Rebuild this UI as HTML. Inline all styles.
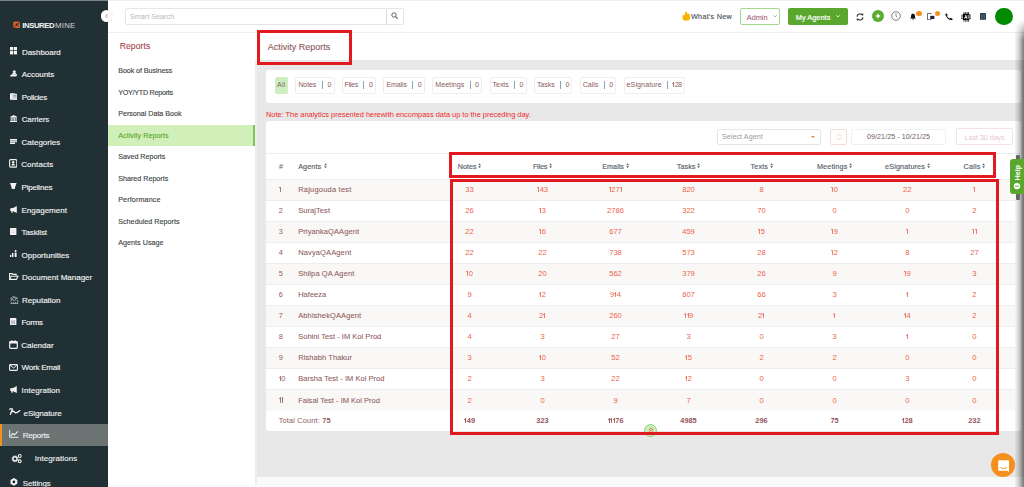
<!DOCTYPE html>
<html><head><meta charset="utf-8">
<style>
*{box-sizing:border-box;margin:0;padding:0}
html,body{width:1024px;height:487px;overflow:hidden;background:#fff;font-family:"Liberation Sans",sans-serif}
.a{position:absolute;white-space:nowrap}
.t{position:absolute;white-space:nowrap;line-height:12px;height:12px}
.row{position:absolute;left:266px;width:748.7px}
.rb{position:absolute;border:3.5px solid #e11a1f}
.n1{display:inline-block;position:relative;width:0.36em;height:0.71em}
.n1:before{content:"";position:absolute;left:0.15em;top:0;bottom:0;width:0.095em;background:currentColor;opacity:.8}
.n1:after{content:"";position:absolute;left:0.03em;top:0.1em;width:0.16em;height:0.085em;background:currentColor;transform:rotate(-38deg);opacity:.8}
.b1:before{width:0.15em;opacity:.9}.b1:after{height:0.12em;opacity:.9}
</style></head><body>
<div class="a" style="left:0;top:0;width:108px;height:487px;background:#213035"></div>
<div class="a" style="left:0;top:0;width:108px;height:1px;background:#7e8486"></div>
<div class="a" style="left:0;top:424px;width:108px;height:22px;background:#6b7373"></div>
<div class="a" style="left:0;top:424px;width:2px;height:22px;background:#f39220"></div>
<svg class="a" style="left:13px;top:21px" width="7.4" height="7.4" viewBox="0 0 7.4 7.4"><defs><linearGradient id="lg" x1="0" y1="0" x2="1" y2="1"><stop offset="0" stop-color="#d98a2a"/><stop offset=".5" stop-color="#c8452a"/><stop offset="1" stop-color="#d9962a"/></linearGradient></defs><rect x="0.2" y="0.4" width="7" height="6.8" rx="2" fill="url(#lg)"/><circle cx="3.7" cy="3.7" r="1.1" fill="#22302f"/><circle cx="5.6" cy="1.9" r="0.5" fill="#4a2a20"/><circle cx="1.9" cy="5.6" r="0.5" fill="#4a2a20"/><circle cx="5.3" cy="5.4" r="0.55" fill="#3a2a22"/></svg>
<div class="t" style="left:22.30px;top:19.60px;font-size:7.8px;color:#f4f4f4;letter-spacing:-0.467px;font-weight:700;">INSURED</div>
<div class="t" style="left:55.00px;top:19.60px;font-size:7.8px;color:#d8d8d8;letter-spacing:0.267px;">MINE</div>
<div class="t" style="left:21.90px;top:46.70px;font-size:8.0px;color:#f2f2f2;letter-spacing:-0.030px;-webkit-text-stroke:0.14px #f2f2f2;">Dashboard</div>
<div class="t" style="left:21.70px;top:69.25px;font-size:8.0px;color:#f2f2f2;letter-spacing:-0.044px;-webkit-text-stroke:0.14px #f2f2f2;">Accounts</div>
<div class="t" style="left:21.70px;top:91.80px;font-size:8.0px;color:#f2f2f2;letter-spacing:-0.281px;-webkit-text-stroke:0.14px #f2f2f2;">Policies</div>
<div class="t" style="left:21.70px;top:114.35px;font-size:8.0px;color:#f2f2f2;letter-spacing:-0.121px;-webkit-text-stroke:0.14px #f2f2f2;">Carriers</div>
<div class="t" style="left:21.50px;top:136.90px;font-size:8.0px;color:#f2f2f2;letter-spacing:0.001px;-webkit-text-stroke:0.14px #f2f2f2;">Categories</div>
<div class="t" style="left:21.20px;top:159.45px;font-size:8.0px;color:#f2f2f2;letter-spacing:0.076px;-webkit-text-stroke:0.14px #f2f2f2;">Contacts</div>
<div class="t" style="left:21.50px;top:182.00px;font-size:8.0px;color:#f2f2f2;letter-spacing:-0.196px;-webkit-text-stroke:0.14px #f2f2f2;">Pipelines</div>
<div class="t" style="left:21.50px;top:204.55px;font-size:8.0px;color:#f2f2f2;letter-spacing:0.004px;-webkit-text-stroke:0.14px #f2f2f2;">Engagement</div>
<div class="t" style="left:21.50px;top:227.10px;font-size:8.0px;color:#f2f2f2;letter-spacing:-0.090px;-webkit-text-stroke:0.14px #f2f2f2;">Tasklist</div>
<div class="t" style="left:21.50px;top:249.65px;font-size:8.0px;color:#f2f2f2;letter-spacing:0.010px;-webkit-text-stroke:0.14px #f2f2f2;">Opportunities</div>
<div class="t" style="left:22.00px;top:272.20px;font-size:8.0px;color:#f2f2f2;letter-spacing:-0.004px;-webkit-text-stroke:0.14px #f2f2f2;">Document Manager</div>
<div class="t" style="left:22.00px;top:294.75px;font-size:8.0px;color:#f2f2f2;letter-spacing:-0.033px;-webkit-text-stroke:0.14px #f2f2f2;">Reputation</div>
<div class="t" style="left:21.50px;top:317.30px;font-size:8.0px;color:#f2f2f2;letter-spacing:-0.266px;-webkit-text-stroke:0.14px #f2f2f2;">Forms</div>
<div class="t" style="left:21.20px;top:339.85px;font-size:8.0px;color:#f2f2f2;letter-spacing:-0.009px;-webkit-text-stroke:0.14px #f2f2f2;">Calendar</div>
<div class="t" style="left:21.60px;top:362.40px;font-size:8.0px;color:#f2f2f2;letter-spacing:-0.238px;-webkit-text-stroke:0.14px #f2f2f2;">Work Email</div>
<div class="t" style="left:21.60px;top:384.95px;font-size:8.0px;color:#f2f2f2;letter-spacing:0.060px;-webkit-text-stroke:0.14px #f2f2f2;">Integration</div>
<div class="t" style="left:23.50px;top:407.50px;font-size:8.0px;color:#f2f2f2;letter-spacing:-0.044px;-webkit-text-stroke:0.14px #f2f2f2;">eSignature</div>
<div class="t" style="left:22.70px;top:429.70px;font-size:8.0px;color:#f2f2f2;letter-spacing:-0.202px;-webkit-text-stroke:0.12px #f2f2f2;">Reports</div>
<div class="t" style="left:34.70px;top:452.90px;font-size:8.0px;color:#f2f2f2;letter-spacing:0.063px;-webkit-text-stroke:0.12px #f2f2f2;">Integrations</div>
<div class="t" style="left:22.70px;top:478.00px;font-size:8.0px;color:#f2f2f2;letter-spacing:-0.115px;-webkit-text-stroke:0.12px #f2f2f2;">Settings</div>
<svg class="a" style="left:9.9px;top:47.2px" width="7.4" height="7.4" viewBox="0 0 7.4 7.4"><rect x="0" y="0" width="3.3" height="3.3" fill="#f2f2f2"/><rect x="4" y="0" width="3.4" height="3.3" fill="#f2f2f2"/><rect x="0" y="4" width="3.3" height="3.4" fill="#f2f2f2"/><rect x="4" y="4" width="3.4" height="3.4" fill="#f2f2f2"/></svg>
<svg class="a" style="left:9.9px;top:70px" width="7.2" height="6.6" viewBox="0 0 7.2 6.6"><circle cx="4.3" cy="1.7" r="1.5" fill="#f2f2f2"/><path d="M1.6 4.6Q2.2 2.8 4.3 2.8Q6.4 2.8 6.9 4.6Z" fill="#f2f2f2"/><path d="M0 6.6Q0.3 4.4 2.2 4.3L7.2 4.6Q7.1 6.6 5.2 6.6Z" fill="#f2f2f2"/></svg>
<svg class="a" style="left:9.9px;top:92.7px" width="7.3" height="7.2" viewBox="0 0 7.3 7.2"><rect x="0" y="0.3" width="5" height="6.4" rx="0.6" fill="#f2f2f2"/><rect x="2.2" y="0.8" width="5" height="6.4" rx="0.6" fill="#d8dde0"/><rect x="3.2" y="2" width="3" height="0.7" fill="#8a9296"/><rect x="3.2" y="3.6" width="3" height="0.7" fill="#8a9296"/></svg>
<svg class="a" style="left:9.9px;top:115px" width="7.3" height="7" viewBox="0 0 7.3 7"><path d="M3.65 0L7.3 2H0Z" fill="#f2f2f2"/><rect x="0.3" y="2.3" width="6.7" height="0.8" fill="#f2f2f2"/><rect x="0.7" y="3.1" width="1" height="2.7" fill="#f2f2f2"/><rect x="2.4" y="3.1" width="1" height="2.7" fill="#f2f2f2"/><rect x="3.9" y="3.1" width="1" height="2.7" fill="#f2f2f2"/><rect x="5.6" y="3.1" width="1" height="2.7" fill="#f2f2f2"/><rect x="0" y="5.9" width="7.3" height="1.1" fill="#f2f2f2"/></svg>
<svg class="a" style="left:9.9px;top:138.6px" width="7.2" height="5.2" viewBox="0 0 7.2 5.2"><rect x="0" y="0" width="7.2" height="1.6" fill="#f2f2f2"/><rect x="0" y="1.8" width="7.2" height="1.5" fill="#cfd4d7"/><rect x="0" y="3.5" width="5" height="1.6" fill="#f2f2f2"/></svg>
<svg class="a" style="left:9px;top:159.3px" width="8.4" height="8.7" viewBox="0 0 8.4 8.7"><rect x="0.6" y="0.6" width="7.2" height="7.5" rx="1" fill="none" stroke="#f2f2f2" stroke-width="1.1"/><circle cx="4.2" cy="3.2" r="1.2" fill="#f2f2f2"/><path d="M2.3 6.6Q2.6 4.4 4.2 4.4Q5.8 4.4 6.1 6.6Z" fill="#f2f2f2"/></svg>
<svg class="a" style="left:10.4px;top:182.9px" width="6.6" height="6.4" viewBox="0 0 6.6 6.4"><path d="M0 0H6.6L5.4 3.3L4.6 6.4H2L1.2 3.3Z" fill="#f2f2f2"/></svg>
<svg class="a" style="left:9.9px;top:205.6px" width="7" height="7" viewBox="0 0 7 7"><path d="M0.3 2.2L2.6 2H3.2L6.8 0V7L3.2 5.2H2.6L2.9 6.8H1.6L1.2 5H0.3Z" fill="#f2f2f2"/></svg>
<svg class="a" style="left:10.4px;top:227.7px" width="6.4" height="7.3" viewBox="0 0 6.4 7.3"><rect x="0" y="0" width="6.4" height="7.3" rx="0.5" fill="#f2f2f2"/><rect x="1.2" y="2.4" width="4" height="0.5" fill="#c9ced1"/><rect x="1.2" y="4.2" width="4" height="0.5" fill="#c9ced1"/></svg>
<svg class="a" style="left:9.9px;top:250.3px" width="7.1" height="7" viewBox="0 0 7.1 7"><rect x="0" y="4.8" width="1.4" height="2.2" fill="#f2f2f2"/><rect x="2" y="3" width="1.4" height="4" fill="#f2f2f2"/><circle cx="5.6" cy="1.1" r="1" fill="#f2f2f2"/><rect x="4.6" y="2.4" width="2" height="4.6" rx="0.5" fill="#f2f2f2"/></svg>
<svg class="a" style="left:9.2px;top:272.9px" width="9.6" height="7" viewBox="0 0 9.6 7"><path d="M0.6 6.4V0.6H3.2L4 1.4H7.2V2.8" fill="none" stroke="#f2f2f2" stroke-width="1.1"/><path d="M0.6 6.4L2 3.2H9L7.4 6.4Z" fill="none" stroke="#f2f2f2" stroke-width="1.1"/></svg>
<svg class="a" style="left:10.2px;top:295.7px" width="8.6" height="8.1" viewBox="0 0 8.6 8.1"><g fill="none" stroke="#aab2b6" stroke-width="0.9"><circle cx="1.6" cy="2.6" r="0.9"/><circle cx="3.6" cy="0.9" r="0.8"/><circle cx="5.7" cy="2" r="0.8"/><path d="M0.3 5.2L2.4 3.6L4.6 4.6L8 1.6"/><path d="M0.5 7.6H8.2M1.6 6V7.6M3.6 6V7.6M5.6 6V7.6M7.6 4V7.6"/></g></svg>
<svg class="a" style="left:10.4px;top:318px" width="6.4" height="7.2" viewBox="0 0 6.4 7.2"><rect x="0" y="0" width="6.4" height="7.2" rx="0.7" fill="#f2f2f2"/><rect x="1.3" y="2.2" width="1.2" height="4" fill="#9a9aa8"/><rect x="3.6" y="2.2" width="1.2" height="4" fill="#8e98a4"/></svg>
<svg class="a" style="left:9px;top:340.2px" width="9" height="9" viewBox="0 0 9 9"><rect x="0.7" y="1.5" width="7.6" height="6.9" rx="1" fill="none" stroke="#f2f2f2" stroke-width="1.2"/><rect x="0.7" y="1.5" width="7.6" height="2" fill="#f2f2f2"/><rect x="2.3" y="0.3" width="1.2" height="1.8" fill="#f2f2f2"/><rect x="5.5" y="0.3" width="1.2" height="1.8" fill="#f2f2f2"/></svg>
<svg class="a" style="left:9px;top:363.5px" width="9" height="7" viewBox="0 0 9 7"><rect x="0.6" y="0.6" width="7.8" height="5.8" rx="0.8" fill="none" stroke="#f2f2f2" stroke-width="1.1"/><path d="M1.2 1.2L4.5 4L7.8 1.2" fill="none" stroke="#f2f2f2" stroke-width="1"/></svg>
<svg class="a" style="left:9.9px;top:385.6px" width="7" height="7" viewBox="0 0 7 7"><path d="M0.3 2.2L2.6 2H3.2L6.8 0V7L3.2 5.2H2.6L2.9 6.8H1.6L1.2 5H0.3Z" fill="#f2f2f2"/></svg>
<svg class="a" style="left:8px;top:406px" width="13" height="10" viewBox="0 0 13 10"><path d="M1.6 3.2Q3.2 2.2 4.4 3Q3.6 5.4 2.4 8.2M4.2 5.6Q5.6 4.6 6.6 6.2Q7.6 7.2 9.2 6.4Q10.6 5.6 11.8 4.6" fill="none" stroke="#f2f2f2" stroke-width="1.35" stroke-linecap="round" stroke-linejoin="round"/></svg>
<svg class="a" style="left:9.1px;top:430px" width="10" height="8" viewBox="0 0 10 8"><path d="M0.7 0V7.3H9.6" fill="none" stroke="#e6e8ea" stroke-width="1"/><path d="M1.6 6.2L3.8 3.6L5.6 4.8L8.8 1.4" fill="none" stroke="#f2f2f2" stroke-width="1.1"/></svg>
<svg class="a" style="left:10.6px;top:454.4px" width="11" height="10" viewBox="0 0 11 10"><circle cx="4" cy="4.8" r="2.9" fill="none" stroke="#f2f2f2" stroke-width="1" stroke-dasharray="1.1 0.9"/><circle cx="4" cy="4.8" r="2.1" fill="none" stroke="#f2f2f2" stroke-width="1.4"/><circle cx="8.7" cy="2" r="1.45" fill="none" stroke="#f2f2f2" stroke-width="1.1"/><circle cx="8.7" cy="7.3" r="1.45" fill="none" stroke="#f2f2f2" stroke-width="1.1"/></svg>
<svg class="a" style="left:10.3px;top:477.9px" width="7.8" height="7.8" viewBox="0 0 7.8 7.8"><path d="M3.9 0L7.3 2V5.8L3.9 7.8L0.5 5.8V2Z" fill="#f2f2f2"/><circle cx="3.9" cy="3.9" r="1.3" fill="#111a1e"/></svg>
<div class="a" style="left:108px;top:0;width:916px;height:1px;background:#eeeeee"></div>
<div class="a" style="left:108px;top:32px;width:916px;height:1px;background:#efefef"></div>
<div class="a" style="left:100.6px;top:10.4px;width:11.7px;height:11.7px;border-radius:50%;background:#fff;box-shadow:0 0 1.5px rgba(0,0,0,.2)"></div>
<div class="a" style="left:124.5px;top:8px;width:262px;height:17px;border:1px solid #e6e6e6;border-radius:2px 0 0 2px"></div>
<div class="a" style="left:386px;top:8px;width:18px;height:17px;border:1px solid #e6e6e6;border-left:1px solid #dcdcdc;border-radius:0 2px 2px 0"></div>
<div class="t" style="left:130.00px;top:11.40px;font-size:7.2px;color:#b8b8b8;letter-spacing:0.017px;">Smart Search</div>
<div class="t" style="left:691.00px;top:11.30px;font-size:7.3px;color:#474f58;letter-spacing:0.221px;-webkit-text-stroke:0.12px #474f58;">What&#x27;s New</div>
<div class="a" style="left:740.3px;top:8.3px;width:39.3px;height:16.7px;border:1px solid #a3d98a;border-radius:2px"></div>
<div class="t" style="left:746.80px;top:11.50px;font-size:7.3px;color:#9a5466;letter-spacing:0.002px;">Admin</div>
<div class="a" style="left:787.5px;top:8.3px;width:60.4px;height:16.7px;background:#5aa72d;border-radius:2px"></div>
<div class="t" style="left:795.80px;top:11.50px;font-size:7.3px;color:#ffffff;letter-spacing:0.052px;-webkit-text-stroke:0.2px #ffffff;">My Agents</div>
<div class="a" style="left:994.9px;top:7.5px;width:17.8px;height:17.8px;border-radius:50%;background:#028a02"></div>
<div class="a" style="left:871.7px;top:10.2px;width:12.1px;height:12.1px;border-radius:50%;background:#5aab2e"></div>
<div class="t" style="left:119.70px;top:40.40px;font-size:8.6px;color:#a84848;letter-spacing:0.081px;-webkit-text-stroke:0.1px #a84848;">Reports</div>
<div class="a" style="left:108px;top:125px;width:147px;height:21px;background:#d1f0b9"></div>
<div class="a" style="left:253.3px;top:125px;width:1.7px;height:21px;background:#80c256"></div>
<div class="t" style="left:118.20px;top:65.30px;font-size:7.2px;color:#3a3f44;letter-spacing:-0.089px;-webkit-text-stroke:0.12px #3a3f44;">Book of Business</div>
<div class="t" style="left:118.20px;top:86.80px;font-size:7.2px;color:#3a3f44;letter-spacing:-0.273px;-webkit-text-stroke:0.12px #3a3f44;">YOY/YTD Reports</div>
<div class="t" style="left:118.20px;top:108.30px;font-size:7.2px;color:#3a3f44;letter-spacing:-0.032px;-webkit-text-stroke:0.12px #3a3f44;">Personal Data Book</div>
<div class="t" style="left:118.20px;top:129.80px;font-size:7.2px;color:#5aa72d;letter-spacing:0.026px;-webkit-text-stroke:0.12px #5aa72d;">Activity Reports</div>
<div class="t" style="left:118.20px;top:151.30px;font-size:7.2px;color:#3a3f44;letter-spacing:-0.036px;-webkit-text-stroke:0.12px #3a3f44;">Saved Reports</div>
<div class="t" style="left:118.20px;top:172.80px;font-size:7.2px;color:#3a3f44;letter-spacing:-0.018px;-webkit-text-stroke:0.12px #3a3f44;">Shared Reports</div>
<div class="t" style="left:118.20px;top:194.30px;font-size:7.2px;color:#3a3f44;letter-spacing:0.118px;-webkit-text-stroke:0.12px #3a3f44;">Performance</div>
<div class="t" style="left:118.20px;top:215.80px;font-size:7.2px;color:#3a3f44;letter-spacing:0.016px;-webkit-text-stroke:0.12px #3a3f44;">Scheduled Reports</div>
<div class="t" style="left:118.20px;top:237.30px;font-size:7.2px;color:#3a3f44;letter-spacing:0.025px;-webkit-text-stroke:0.12px #3a3f44;">Agents Usage</div>
<div class="a" style="left:255px;top:60px;width:769px;height:417px;background:#e8e8e8"></div>
<div class="a" style="left:255px;top:477px;width:769px;height:8px;background:#f9f9f9"></div>
<div class="a" style="left:255px;top:60px;width:1.6px;height:425px;background:#eeeeee"></div>
<div class="a" style="left:108px;top:485px;width:916px;height:2px;background:#fcfcfc"></div>
<div class="t" style="left:267.70px;top:40.90px;font-size:9.0px;color:#8e5a60;letter-spacing:-0.001px;-webkit-text-stroke:0.12px #8e5a60;">Activity Reports</div>
<div class="a" style="left:266px;top:70.3px;width:754.5px;height:32.5px;background:#fff;border-radius:3px"></div>
<div class="a" style="left:274.5px;top:77.2px;width:13.5px;height:16.4px;background:#cdeec0;border-radius:2px"></div>
<div class="t" style="left:277.00px;top:79.40px;font-size:7.1px;color:#8b5b60;letter-spacing:0.255px;">All</div>
<div class="a" style="left:295.4px;top:77.2px;width:39.3px;height:16.4px;border:1px solid #eeeeee;border-radius:2px;background:#fff"></div>
<div class="t" style="left:298.40px;top:79.40px;font-size:7.1px;color:#8b5b60;letter-spacing:-0.162px;">Notes</div>
<div class="a" style="left:321.9px;top:81px;width:1px;height:8px;background:#86a4be"></div>
<div class="t" style="left:327.40px;top:79.40px;font-size:7.1px;color:#8b5b60;">0</div>
<div class="a" style="left:341.9px;top:77.2px;width:34.5px;height:16.4px;border:1px solid #eeeeee;border-radius:2px;background:#fff"></div>
<div class="t" style="left:344.60px;top:79.40px;font-size:7.1px;color:#8b5b60;letter-spacing:-0.323px;">Files</div>
<div class="a" style="left:363.4px;top:81px;width:1px;height:8px;background:#86a4be"></div>
<div class="t" style="left:368.90px;top:79.40px;font-size:7.1px;color:#8b5b60;">0</div>
<div class="a" style="left:383.3px;top:77.2px;width:41.7px;height:16.4px;border:1px solid #eeeeee;border-radius:2px;background:#fff"></div>
<div class="t" style="left:386.40px;top:79.40px;font-size:7.1px;color:#8b5b60;letter-spacing:-0.141px;">Emails</div>
<div class="a" style="left:412.2px;top:81px;width:1px;height:8px;background:#86a4be"></div>
<div class="t" style="left:417.70px;top:79.40px;font-size:7.1px;color:#8b5b60;">0</div>
<div class="a" style="left:432.1px;top:77.2px;width:50.4px;height:16.4px;border:1px solid #eeeeee;border-radius:2px;background:#fff"></div>
<div class="t" style="left:435.20px;top:79.40px;font-size:7.1px;color:#8b5b60;letter-spacing:0.042px;">Meetings</div>
<div class="a" style="left:469.5px;top:81px;width:1px;height:8px;background:#86a4be"></div>
<div class="t" style="left:475.00px;top:79.40px;font-size:7.1px;color:#8b5b60;">0</div>
<div class="a" style="left:489.7px;top:77.2px;width:37.1px;height:16.4px;border:1px solid #eeeeee;border-radius:2px;background:#fff"></div>
<div class="t" style="left:492.60px;top:79.40px;font-size:7.1px;color:#8b5b60;letter-spacing:-0.093px;">Texts</div>
<div class="a" style="left:513.9px;top:81px;width:1px;height:8px;background:#86a4be"></div>
<div class="t" style="left:519.40px;top:79.40px;font-size:7.1px;color:#8b5b60;">0</div>
<div class="a" style="left:534.2px;top:77.2px;width:37.9px;height:16.4px;border:1px solid #eeeeee;border-radius:2px;background:#fff"></div>
<div class="t" style="left:536.90px;top:79.40px;font-size:7.1px;color:#8b5b60;letter-spacing:-0.062px;">Tasks</div>
<div class="a" style="left:560.0px;top:81px;width:1px;height:8px;background:#86a4be"></div>
<div class="t" style="left:565.50px;top:79.40px;font-size:7.1px;color:#8b5b60;">0</div>
<div class="a" style="left:580.0px;top:77.2px;width:36.0px;height:16.4px;border:1px solid #eeeeee;border-radius:2px;background:#fff"></div>
<div class="t" style="left:582.70px;top:79.40px;font-size:7.1px;color:#8b5b60;letter-spacing:-0.020px;">Calls</div>
<div class="a" style="left:603.8px;top:81px;width:1px;height:8px;background:#86a4be"></div>
<div class="t" style="left:609.30px;top:79.40px;font-size:7.1px;color:#8b5b60;">0</div>
<div class="a" style="left:623.6px;top:77.2px;width:61.5px;height:16.4px;border:1px solid #eeeeee;border-radius:2px;background:#fff"></div>
<div class="t" style="left:626.50px;top:79.40px;font-size:7.1px;color:#8b5b60;letter-spacing:0.106px;">eSignature</div>
<div class="a" style="left:666.7px;top:81px;width:1px;height:8px;background:#86a4be"></div>
<div class="t" style="left:672.20px;top:79.40px;font-size:7.1px;color:#8b5b60;letter-spacing:-0.773px;"><span class="n1"></span>28</div>
<div class="t" style="left:266.00px;top:109.00px;font-size:7.39px;color:#ee2a2a;letter-spacing:0.002px;">Note: The analytics presented herewith encompass data up to the preceding day.</div>
<div class="a" style="left:266px;top:121px;width:754.5px;height:310px;background:#fff;border-radius:3px"></div>
<div class="a" style="left:266px;top:178.8px;width:748.7px;height:1px;background:#ededed"></div>
<div class="a" style="left:266px;top:153px;width:754.5px;height:1px;background:#eeeeee"></div>
<div class="a" style="left:716.6px;top:128.5px;width:104.4px;height:16.7px;border:1px solid #e6e6e6;border-radius:2px;box-shadow:0 0 1px rgba(0,0,0,.06)"></div>
<div class="t" style="left:722.00px;top:131.00px;font-size:7.1px;color:#9a9a9a;letter-spacing:0.076px;">Select Agent</div>
<svg class="a" style="left:811.2px;top:135.8px" width="3.8" height="2.2" viewBox="0 0 3.8 2.2"><path d="M0 0H3.8L1.9 2.2Z" fill="#f0892a"/></svg>
<div class="a" style="left:830.3px;top:128.5px;width:16.9px;height:16.7px;border:1px solid #f2dcd6;border-radius:2px"></div>
<div class="a" style="left:851.3px;top:128.5px;width:94.6px;height:16.7px;border:1px solid #edf0f4;border-radius:2px"></div>
<div class="t" style="left:867.00px;top:131.20px;font-size:7.1px;color:#6a5a5e;letter-spacing:0.079px;">09/21/25 - 10/21/25</div>
<div class="a" style="left:955.7px;top:128.3px;width:57.8px;height:16.7px;border:1px solid #f3e3e3;border-radius:2px"></div>
<div class="t" style="left:964.60px;top:131.60px;font-size:7.1px;color:#e6c9c9;letter-spacing:-0.015px;">Last 30 days</div>
<div class="t" style="left:279.00px;top:160.70px;font-size:7.2px;color:#566068;">#</div>
<div class="t" style="left:298.20px;top:160.70px;font-size:7.2px;color:#566068;letter-spacing:0.117px;-webkit-text-stroke:0.15px #566068;">Agents</div>
<svg class="a" style="left:323.8px;top:162.6px" width="3.2" height="5.4" viewBox="0 0 3.2 5.4"><path d="M1.6 0.2L3 2.2H0.2Z M1.6 5.2L3 3.2H0.2Z" fill="#5a646c"/></svg>
<div class="t" style="left:457.80px;top:160.70px;font-size:7.2px;color:#566068;letter-spacing:-0.002px;-webkit-text-stroke:0.15px #566068;">Notes</div>
<svg class="a" style="left:478.20000000000005px;top:163.0px" width="3.2" height="5.4" viewBox="0 0 3.2 5.4"><path d="M1.6 0.2L3 2.2H0.2Z M1.6 5.2L3 3.2H0.2Z" fill="#5a646c"/></svg>
<div class="t" style="left:532.90px;top:160.70px;font-size:7.2px;color:#566068;letter-spacing:-0.175px;-webkit-text-stroke:0.15px #566068;">Files</div>
<svg class="a" style="left:549.0px;top:163.0px" width="3.2" height="5.4" viewBox="0 0 3.2 5.4"><path d="M1.6 0.2L3 2.2H0.2Z M1.6 5.2L3 3.2H0.2Z" fill="#5a646c"/></svg>
<div class="t" style="left:602.30px;top:160.70px;font-size:7.2px;color:#566068;letter-spacing:0.019px;-webkit-text-stroke:0.15px #566068;">Emails</div>
<svg class="a" style="left:625.6px;top:163.0px" width="3.2" height="5.4" viewBox="0 0 3.2 5.4"><path d="M1.6 0.2L3 2.2H0.2Z M1.6 5.2L3 3.2H0.2Z" fill="#5a646c"/></svg>
<div class="t" style="left:676.80px;top:160.70px;font-size:7.2px;color:#566068;letter-spacing:0.074px;-webkit-text-stroke:0.15px #566068;">Tasks</div>
<svg class="a" style="left:697.1px;top:163.0px" width="3.2" height="5.4" viewBox="0 0 3.2 5.4"><path d="M1.6 0.2L3 2.2H0.2Z M1.6 5.2L3 3.2H0.2Z" fill="#5a646c"/></svg>
<div class="t" style="left:750.60px;top:160.70px;font-size:7.2px;color:#566068;letter-spacing:0.149px;-webkit-text-stroke:0.15px #566068;">Texts</div>
<svg class="a" style="left:769.6px;top:163.0px" width="3.2" height="5.4" viewBox="0 0 3.2 5.4"><path d="M1.6 0.2L3 2.2H0.2Z M1.6 5.2L3 3.2H0.2Z" fill="#5a646c"/></svg>
<div class="t" style="left:816.90px;top:160.70px;font-size:7.2px;color:#566068;letter-spacing:0.169px;-webkit-text-stroke:0.15px #566068;">Meetings</div>
<svg class="a" style="left:848.9px;top:163.0px" width="3.2" height="5.4" viewBox="0 0 3.2 5.4"><path d="M1.6 0.2L3 2.2H0.2Z M1.6 5.2L3 3.2H0.2Z" fill="#5a646c"/></svg>
<div class="t" style="left:885.10px;top:160.70px;font-size:7.2px;color:#566068;letter-spacing:0.137px;-webkit-text-stroke:0.15px #566068;">eSignatures</div>
<svg class="a" style="left:926.5px;top:163.0px" width="3.2" height="5.4" viewBox="0 0 3.2 5.4"><path d="M1.6 0.2L3 2.2H0.2Z M1.6 5.2L3 3.2H0.2Z" fill="#5a646c"/></svg>
<div class="t" style="left:963.60px;top:160.70px;font-size:7.2px;color:#566068;letter-spacing:0.199px;-webkit-text-stroke:0.15px #566068;">Calls</div>
<svg class="a" style="left:982.0px;top:163.0px" width="3.2" height="5.4" viewBox="0 0 3.2 5.4"><path d="M1.6 0.2L3 2.2H0.2Z M1.6 5.2L3 3.2H0.2Z" fill="#5a646c"/></svg>
<div class="row" style="top:179.60px;height:21.06px;background:#faf8f6;border-bottom:1px solid #ededed;"></div>
<div class="t" style="left:278.70px;top:183.90px;font-size:7.4px;color:#8f5c60;"><span class="n1"></span></div>
<div class="t" style="left:298.20px;top:183.90px;font-size:7.5px;color:#8f5c60;letter-spacing:0.204px;-webkit-text-stroke:0.08px #8f5c60;">Rajugouda test</div>
<div class="t" style="left:409.60px;width:120px;text-align:center;top:183.90px;font-size:7.6px;color:#ec5f4a;">33</div>
<div class="t" style="left:482.50px;width:120px;text-align:center;top:183.90px;font-size:7.6px;color:#ec5f4a;"><span class="n1"></span>43</div>
<div class="t" style="left:555.50px;width:120px;text-align:center;top:183.90px;font-size:7.6px;color:#ec5f4a;"><span class="n1"></span>27<span class="n1"></span></div>
<div class="t" style="left:628.50px;width:120px;text-align:center;top:183.90px;font-size:7.6px;color:#ec5f4a;">820</div>
<div class="t" style="left:701.50px;width:120px;text-align:center;top:183.90px;font-size:7.6px;color:#ec5f4a;">8</div>
<div class="t" style="left:774.50px;width:120px;text-align:center;top:183.90px;font-size:7.6px;color:#ec5f4a;"><span class="n1"></span>0</div>
<div class="t" style="left:847.30px;width:120px;text-align:center;top:183.90px;font-size:7.6px;color:#ec5f4a;">22</div>
<div class="t" style="left:914.40px;width:120px;text-align:center;top:183.90px;font-size:7.6px;color:#ec5f4a;"><span class="n1"></span></div>
<div class="row" style="top:200.66px;height:21.06px;border-bottom:1px solid #ededed;"></div>
<div class="t" style="left:278.70px;top:204.96px;font-size:7.4px;color:#8f5c60;">2</div>
<div class="t" style="left:298.20px;top:204.96px;font-size:7.5px;color:#8f5c60;letter-spacing:0.067px;-webkit-text-stroke:0.08px #8f5c60;">SurajTest</div>
<div class="t" style="left:409.60px;width:120px;text-align:center;top:204.96px;font-size:7.6px;color:#ec5f4a;">26</div>
<div class="t" style="left:482.50px;width:120px;text-align:center;top:204.96px;font-size:7.6px;color:#ec5f4a;"><span class="n1"></span>3</div>
<div class="t" style="left:555.50px;width:120px;text-align:center;top:204.96px;font-size:7.6px;color:#ec5f4a;">2786</div>
<div class="t" style="left:628.50px;width:120px;text-align:center;top:204.96px;font-size:7.6px;color:#ec5f4a;">322</div>
<div class="t" style="left:701.50px;width:120px;text-align:center;top:204.96px;font-size:7.6px;color:#ec5f4a;">70</div>
<div class="t" style="left:774.50px;width:120px;text-align:center;top:204.96px;font-size:7.6px;color:#ec5f4a;">0</div>
<div class="t" style="left:847.30px;width:120px;text-align:center;top:204.96px;font-size:7.6px;color:#ec5f4a;">0</div>
<div class="t" style="left:914.40px;width:120px;text-align:center;top:204.96px;font-size:7.6px;color:#ec5f4a;">2</div>
<div class="row" style="top:221.72px;height:21.06px;background:#faf8f6;border-bottom:1px solid #ededed;"></div>
<div class="t" style="left:278.70px;top:226.02px;font-size:7.4px;color:#8f5c60;">3</div>
<div class="t" style="left:298.20px;top:226.02px;font-size:7.5px;color:#8f5c60;letter-spacing:0.092px;-webkit-text-stroke:0.08px #8f5c60;">PriyankaQAAgent</div>
<div class="t" style="left:409.60px;width:120px;text-align:center;top:226.02px;font-size:7.6px;color:#ec5f4a;">22</div>
<div class="t" style="left:482.50px;width:120px;text-align:center;top:226.02px;font-size:7.6px;color:#ec5f4a;"><span class="n1"></span>6</div>
<div class="t" style="left:555.50px;width:120px;text-align:center;top:226.02px;font-size:7.6px;color:#ec5f4a;">677</div>
<div class="t" style="left:628.50px;width:120px;text-align:center;top:226.02px;font-size:7.6px;color:#ec5f4a;">459</div>
<div class="t" style="left:701.50px;width:120px;text-align:center;top:226.02px;font-size:7.6px;color:#ec5f4a;"><span class="n1"></span>5</div>
<div class="t" style="left:774.50px;width:120px;text-align:center;top:226.02px;font-size:7.6px;color:#ec5f4a;"><span class="n1"></span>9</div>
<div class="t" style="left:847.30px;width:120px;text-align:center;top:226.02px;font-size:7.6px;color:#ec5f4a;"><span class="n1"></span></div>
<div class="t" style="left:914.40px;width:120px;text-align:center;top:226.02px;font-size:7.6px;color:#ec5f4a;"><span class="n1"></span><span class="n1"></span></div>
<div class="row" style="top:242.78px;height:21.06px;border-bottom:1px solid #ededed;"></div>
<div class="t" style="left:278.70px;top:247.08px;font-size:7.4px;color:#8f5c60;">4</div>
<div class="t" style="left:298.20px;top:247.08px;font-size:7.5px;color:#8f5c60;letter-spacing:0.128px;-webkit-text-stroke:0.08px #8f5c60;">NavyaQAAgent</div>
<div class="t" style="left:409.60px;width:120px;text-align:center;top:247.08px;font-size:7.6px;color:#ec5f4a;">22</div>
<div class="t" style="left:482.50px;width:120px;text-align:center;top:247.08px;font-size:7.6px;color:#ec5f4a;">22</div>
<div class="t" style="left:555.50px;width:120px;text-align:center;top:247.08px;font-size:7.6px;color:#ec5f4a;">738</div>
<div class="t" style="left:628.50px;width:120px;text-align:center;top:247.08px;font-size:7.6px;color:#ec5f4a;">573</div>
<div class="t" style="left:701.50px;width:120px;text-align:center;top:247.08px;font-size:7.6px;color:#ec5f4a;">28</div>
<div class="t" style="left:774.50px;width:120px;text-align:center;top:247.08px;font-size:7.6px;color:#ec5f4a;"><span class="n1"></span>2</div>
<div class="t" style="left:847.30px;width:120px;text-align:center;top:247.08px;font-size:7.6px;color:#ec5f4a;">8</div>
<div class="t" style="left:914.40px;width:120px;text-align:center;top:247.08px;font-size:7.6px;color:#ec5f4a;">27</div>
<div class="row" style="top:263.84px;height:21.06px;background:#faf8f6;border-bottom:1px solid #ededed;"></div>
<div class="t" style="left:278.70px;top:268.14px;font-size:7.4px;color:#8f5c60;">5</div>
<div class="t" style="left:298.20px;top:268.14px;font-size:7.5px;color:#8f5c60;letter-spacing:0.105px;-webkit-text-stroke:0.08px #8f5c60;">Shilpa QA Agent</div>
<div class="t" style="left:409.60px;width:120px;text-align:center;top:268.14px;font-size:7.6px;color:#ec5f4a;"><span class="n1"></span>0</div>
<div class="t" style="left:482.50px;width:120px;text-align:center;top:268.14px;font-size:7.6px;color:#ec5f4a;">20</div>
<div class="t" style="left:555.50px;width:120px;text-align:center;top:268.14px;font-size:7.6px;color:#ec5f4a;">562</div>
<div class="t" style="left:628.50px;width:120px;text-align:center;top:268.14px;font-size:7.6px;color:#ec5f4a;">379</div>
<div class="t" style="left:701.50px;width:120px;text-align:center;top:268.14px;font-size:7.6px;color:#ec5f4a;">26</div>
<div class="t" style="left:774.50px;width:120px;text-align:center;top:268.14px;font-size:7.6px;color:#ec5f4a;">9</div>
<div class="t" style="left:847.30px;width:120px;text-align:center;top:268.14px;font-size:7.6px;color:#ec5f4a;"><span class="n1"></span>9</div>
<div class="t" style="left:914.40px;width:120px;text-align:center;top:268.14px;font-size:7.6px;color:#ec5f4a;">3</div>
<div class="row" style="top:284.90px;height:21.06px;border-bottom:1px solid #ededed;"></div>
<div class="t" style="left:278.70px;top:289.20px;font-size:7.4px;color:#8f5c60;">6</div>
<div class="t" style="left:298.20px;top:289.20px;font-size:7.5px;color:#8f5c60;letter-spacing:0.011px;-webkit-text-stroke:0.08px #8f5c60;">Hafeeza</div>
<div class="t" style="left:409.60px;width:120px;text-align:center;top:289.20px;font-size:7.6px;color:#ec5f4a;">9</div>
<div class="t" style="left:482.50px;width:120px;text-align:center;top:289.20px;font-size:7.6px;color:#ec5f4a;"><span class="n1"></span>2</div>
<div class="t" style="left:555.50px;width:120px;text-align:center;top:289.20px;font-size:7.6px;color:#ec5f4a;">9<span class="n1"></span>4</div>
<div class="t" style="left:628.50px;width:120px;text-align:center;top:289.20px;font-size:7.6px;color:#ec5f4a;">607</div>
<div class="t" style="left:701.50px;width:120px;text-align:center;top:289.20px;font-size:7.6px;color:#ec5f4a;">66</div>
<div class="t" style="left:774.50px;width:120px;text-align:center;top:289.20px;font-size:7.6px;color:#ec5f4a;">3</div>
<div class="t" style="left:847.30px;width:120px;text-align:center;top:289.20px;font-size:7.6px;color:#ec5f4a;"><span class="n1"></span></div>
<div class="t" style="left:914.40px;width:120px;text-align:center;top:289.20px;font-size:7.6px;color:#ec5f4a;">2</div>
<div class="row" style="top:305.96px;height:21.06px;background:#faf8f6;border-bottom:1px solid #ededed;"></div>
<div class="t" style="left:278.70px;top:310.26px;font-size:7.4px;color:#8f5c60;">7</div>
<div class="t" style="left:298.20px;top:310.26px;font-size:7.5px;color:#8f5c60;letter-spacing:0.122px;-webkit-text-stroke:0.08px #8f5c60;">AbhishekQAAgent</div>
<div class="t" style="left:409.60px;width:120px;text-align:center;top:310.26px;font-size:7.6px;color:#ec5f4a;">4</div>
<div class="t" style="left:482.50px;width:120px;text-align:center;top:310.26px;font-size:7.6px;color:#ec5f4a;">2<span class="n1"></span></div>
<div class="t" style="left:555.50px;width:120px;text-align:center;top:310.26px;font-size:7.6px;color:#ec5f4a;">260</div>
<div class="t" style="left:628.50px;width:120px;text-align:center;top:310.26px;font-size:7.6px;color:#ec5f4a;"><span class="n1"></span><span class="n1"></span>9</div>
<div class="t" style="left:701.50px;width:120px;text-align:center;top:310.26px;font-size:7.6px;color:#ec5f4a;">2<span class="n1"></span></div>
<div class="t" style="left:774.50px;width:120px;text-align:center;top:310.26px;font-size:7.6px;color:#ec5f4a;"><span class="n1"></span></div>
<div class="t" style="left:847.30px;width:120px;text-align:center;top:310.26px;font-size:7.6px;color:#ec5f4a;"><span class="n1"></span>4</div>
<div class="t" style="left:914.40px;width:120px;text-align:center;top:310.26px;font-size:7.6px;color:#ec5f4a;">2</div>
<div class="row" style="top:327.02px;height:21.06px;border-bottom:1px solid #ededed;"></div>
<div class="t" style="left:278.70px;top:331.32px;font-size:7.4px;color:#8f5c60;">8</div>
<div class="t" style="left:298.20px;top:331.32px;font-size:7.5px;color:#8f5c60;letter-spacing:0.029px;-webkit-text-stroke:0.08px #8f5c60;">Sohini Test - IM Kol Prod</div>
<div class="t" style="left:409.60px;width:120px;text-align:center;top:331.32px;font-size:7.6px;color:#ec5f4a;">4</div>
<div class="t" style="left:482.50px;width:120px;text-align:center;top:331.32px;font-size:7.6px;color:#ec5f4a;">3</div>
<div class="t" style="left:555.50px;width:120px;text-align:center;top:331.32px;font-size:7.6px;color:#ec5f4a;">27</div>
<div class="t" style="left:628.50px;width:120px;text-align:center;top:331.32px;font-size:7.6px;color:#ec5f4a;">3</div>
<div class="t" style="left:701.50px;width:120px;text-align:center;top:331.32px;font-size:7.6px;color:#ec5f4a;">0</div>
<div class="t" style="left:774.50px;width:120px;text-align:center;top:331.32px;font-size:7.6px;color:#ec5f4a;">3</div>
<div class="t" style="left:847.30px;width:120px;text-align:center;top:331.32px;font-size:7.6px;color:#ec5f4a;"><span class="n1"></span></div>
<div class="t" style="left:914.40px;width:120px;text-align:center;top:331.32px;font-size:7.6px;color:#ec5f4a;">0</div>
<div class="row" style="top:348.08px;height:21.06px;background:#faf8f6;border-bottom:1px solid #ededed;"></div>
<div class="t" style="left:278.70px;top:352.38px;font-size:7.4px;color:#8f5c60;">9</div>
<div class="t" style="left:298.20px;top:352.38px;font-size:7.5px;color:#8f5c60;letter-spacing:0.076px;-webkit-text-stroke:0.08px #8f5c60;">Rishabh Thakur</div>
<div class="t" style="left:409.60px;width:120px;text-align:center;top:352.38px;font-size:7.6px;color:#ec5f4a;">3</div>
<div class="t" style="left:482.50px;width:120px;text-align:center;top:352.38px;font-size:7.6px;color:#ec5f4a;"><span class="n1"></span>0</div>
<div class="t" style="left:555.50px;width:120px;text-align:center;top:352.38px;font-size:7.6px;color:#ec5f4a;">52</div>
<div class="t" style="left:628.50px;width:120px;text-align:center;top:352.38px;font-size:7.6px;color:#ec5f4a;"><span class="n1"></span>5</div>
<div class="t" style="left:701.50px;width:120px;text-align:center;top:352.38px;font-size:7.6px;color:#ec5f4a;">2</div>
<div class="t" style="left:774.50px;width:120px;text-align:center;top:352.38px;font-size:7.6px;color:#ec5f4a;">2</div>
<div class="t" style="left:847.30px;width:120px;text-align:center;top:352.38px;font-size:7.6px;color:#ec5f4a;">0</div>
<div class="t" style="left:914.40px;width:120px;text-align:center;top:352.38px;font-size:7.6px;color:#ec5f4a;">0</div>
<div class="row" style="top:369.14px;height:21.06px;border-bottom:1px solid #ededed;"></div>
<div class="t" style="left:278.70px;top:373.44px;font-size:7.4px;color:#8f5c60;"><span class="n1"></span>0</div>
<div class="t" style="left:298.20px;top:373.44px;font-size:7.5px;color:#8f5c60;letter-spacing:0.041px;-webkit-text-stroke:0.08px #8f5c60;">Barsha Test - IM Kol Prod</div>
<div class="t" style="left:409.60px;width:120px;text-align:center;top:373.44px;font-size:7.6px;color:#ec5f4a;">2</div>
<div class="t" style="left:482.50px;width:120px;text-align:center;top:373.44px;font-size:7.6px;color:#ec5f4a;">3</div>
<div class="t" style="left:555.50px;width:120px;text-align:center;top:373.44px;font-size:7.6px;color:#ec5f4a;">22</div>
<div class="t" style="left:628.50px;width:120px;text-align:center;top:373.44px;font-size:7.6px;color:#ec5f4a;"><span class="n1"></span>2</div>
<div class="t" style="left:701.50px;width:120px;text-align:center;top:373.44px;font-size:7.6px;color:#ec5f4a;">0</div>
<div class="t" style="left:774.50px;width:120px;text-align:center;top:373.44px;font-size:7.6px;color:#ec5f4a;">0</div>
<div class="t" style="left:847.30px;width:120px;text-align:center;top:373.44px;font-size:7.6px;color:#ec5f4a;">3</div>
<div class="t" style="left:914.40px;width:120px;text-align:center;top:373.44px;font-size:7.6px;color:#ec5f4a;">0</div>
<div class="row" style="top:390.20px;height:21.06px;background:#faf8f6;"></div>
<div class="t" style="left:278.70px;top:394.50px;font-size:7.4px;color:#8f5c60;"><span class="n1"></span><span class="n1"></span></div>
<div class="t" style="left:298.20px;top:394.50px;font-size:7.5px;color:#8f5c60;letter-spacing:0.006px;-webkit-text-stroke:0.08px #8f5c60;">Faisal Test - IM Kol Prod</div>
<div class="t" style="left:409.60px;width:120px;text-align:center;top:394.50px;font-size:7.6px;color:#ec5f4a;">2</div>
<div class="t" style="left:482.50px;width:120px;text-align:center;top:394.50px;font-size:7.6px;color:#ec5f4a;">0</div>
<div class="t" style="left:555.50px;width:120px;text-align:center;top:394.50px;font-size:7.6px;color:#ec5f4a;">9</div>
<div class="t" style="left:628.50px;width:120px;text-align:center;top:394.50px;font-size:7.6px;color:#ec5f4a;">7</div>
<div class="t" style="left:701.50px;width:120px;text-align:center;top:394.50px;font-size:7.6px;color:#ec5f4a;">0</div>
<div class="t" style="left:774.50px;width:120px;text-align:center;top:394.50px;font-size:7.6px;color:#ec5f4a;">0</div>
<div class="t" style="left:847.30px;width:120px;text-align:center;top:394.50px;font-size:7.6px;color:#ec5f4a;">0</div>
<div class="t" style="left:914.40px;width:120px;text-align:center;top:394.50px;font-size:7.6px;color:#ec5f4a;">0</div>
<div class="t" style="left:278.70px;top:415.40px;font-size:7.4px;color:#8f5c60;letter-spacing:0.152px;">Total Count: <b>75</b></div>
<div class="t" style="left:409.60px;width:120px;text-align:center;top:415.40px;font-size:7.4px;color:#93555b;font-weight:700;"><span class="n1 b1"></span>49</div>
<div class="t" style="left:482.50px;width:120px;text-align:center;top:415.40px;font-size:7.4px;color:#93555b;font-weight:700;">323</div>
<div class="t" style="left:555.50px;width:120px;text-align:center;top:415.40px;font-size:7.4px;color:#93555b;font-weight:700;"><span class="n1 b1"></span><span class="n1 b1"></span><span class="n1 b1"></span>76</div>
<div class="t" style="left:628.50px;width:120px;text-align:center;top:415.40px;font-size:7.4px;color:#93555b;font-weight:700;">4985</div>
<div class="t" style="left:701.50px;width:120px;text-align:center;top:415.40px;font-size:7.4px;color:#93555b;font-weight:700;">296</div>
<div class="t" style="left:774.50px;width:120px;text-align:center;top:415.40px;font-size:7.4px;color:#93555b;font-weight:700;">75</div>
<div class="t" style="left:847.30px;width:120px;text-align:center;top:415.40px;font-size:7.4px;color:#93555b;font-weight:700;"><span class="n1 b1"></span>28</div>
<div class="t" style="left:914.40px;width:120px;text-align:center;top:415.40px;font-size:7.4px;color:#93555b;font-weight:700;">232</div>
<div class="a" style="left:643.8px;top:424.1px;width:13px;height:13px;border-radius:50%;background:#c9ecb9;border:1px solid #8fd47a"></div>
<div class="rb" style="left:256.9px;top:30.2px;width:95.2px;height:34.6px"></div>
<div class="rb" style="left:449.3px;top:151.9px;width:546.9px;height:25.9px"></div>
<div class="rb" style="left:450.2px;top:179.1px;width:548.7px;height:256px"></div>
<div class="a" style="left:1014.7px;top:20px;width:9.3px;height:467px;background:linear-gradient(to right,rgba(0,0,0,.03) 0%,rgba(0,0,0,.18) 44%,rgba(0,0,0,.34) 70%,rgba(0,0,0,.53) 100%);-webkit-mask-image:linear-gradient(to bottom,transparent 0,#000 20px)"></div>
<div class="a" style="left:1016px;top:154.8px;width:3.6px;height:45px;background:#666;border-radius:1px"></div>
<div class="a" style="left:1010.3px;top:159px;width:14px;height:35px;background:#5aa72d;border-radius:3px 0 0 3px"></div>
<div class="a" style="left:991px;top:453.2px;width:24px;height:24px;border-radius:50%;background:#f5901f"></div>
<svg class="a" style="left:855.5px;top:13.3px" width="8" height="8" viewBox="0 0 8 8"><g fill="none" stroke="#1f2d3d" stroke-width="1.1"><path d="M1 3.6A3 3 0 0 1 6.4 2.2"/><path d="M7 4.4A3 3 0 0 1 1.6 5.8"/></g><path d="M5.2 0.6L7.4 0.8L7 3Z" fill="#1f2d3d"/><path d="M2.8 7.4L0.6 7.2L1 5Z" fill="#1f2d3d"/></svg>
<svg class="a" style="left:873.8px;top:12.4px" width="8" height="8" viewBox="0 0 8 8"><path d="M4 1.8V6.2M1.8 4H6.2" stroke="#fff" stroke-width="1.3"/></svg>
<svg class="a" style="left:891.3px;top:11.4px" width="10" height="10" viewBox="0 0 10 10"><circle cx="5" cy="5" r="4.3" fill="none" stroke="#6d6d6d" stroke-width="0.9"/><path d="M5 2.4V5.2L6.4 6.4" fill="none" stroke="#6d6d6d" stroke-width="0.8"/></svg>
<svg class="a" style="left:909.6px;top:13.2px" width="6" height="6.6" viewBox="0 0 6 6.6"><path d="M3 0.4Q5 0.6 5 3V4.6L6 5.6H0L1 4.6V3Q1 0.6 3 0.4Z" fill="#111"/><circle cx="3" cy="6" r="0.7" fill="#111"/></svg>
<div class="a" style="left:916.4px;top:10.6px;width:5.2px;height:5.2px;border-radius:50%;background:#f5901f"></div>
<svg class="a" style="left:927px;top:13.0px" width="7.5" height="7.2" viewBox="0 0 7.5 7.2"><path d="M4.6 0.5H0.5V6.8H4.6" fill="none" stroke="#556" stroke-width="0.9"/><rect x="3.2" y="2.8" width="4.2" height="3.2" fill="#1a2230"/></svg>
<div class="a" style="left:934.6px;top:10.6px;width:5.2px;height:5.2px;border-radius:50%;background:#f5901f"></div>
<svg class="a" style="left:945px;top:12.9px" width="8" height="7.4" viewBox="0 0 8 7.4"><path d="M1.2 0.2L2.8 2L2 3.1Q3.2 5.2 5 5.6L5.9 4.8L7.9 6.2L6.9 7.3Q2.2 7.2 0.2 1.3Z" fill="#0e1822"/></svg>
<svg class="a" style="left:960.8px;top:12.3px" width="10.4" height="9.8" viewBox="0 0 10.4 9.8"><rect x="2" y="1.8" width="6.4" height="6.2" fill="#000"/><g stroke="#000" stroke-width="0.7"><path d="M3 0V2M4.6 0V2M6.2 0V2M7.6 0V2M3 7.8V9.8M4.6 7.8V9.8M6.2 7.8V9.8M7.6 7.8V9.8M0 3.2H2M0 4.9H2M0 6.6H2M8.4 3.2H10.4M8.4 4.9H10.4M8.4 6.6H10.4"/></g><path d="M3.2 6.8L4.4 3H5.2L6.4 6.8H5.6L5.3 5.9H4.3L4 6.8ZM4.5 5.2H5.1L4.8 4.1Z" fill="#fff"/><rect x="6.8" y="3" width="0.7" height="3.8" fill="#fff"/></svg>
<svg class="a" style="left:980px;top:13.2px" width="6" height="6.8" viewBox="0 0 6 6.8"><rect x="0" y="0" width="6" height="6.8" rx="0.6" fill="#243a4a"/><rect x="1" y="1" width="4" height="4.8" fill="#4a6070"/><path d="M3 1V5.8" stroke="#1a2a36" stroke-width="0.6"/></svg>
<svg class="a" style="left:681.6px;top:11.4px" width="8.6" height="10" viewBox="0 0 8.6 10"><path d="M4.2 0.2Q5.6 2 5.4 3.4Q6 2.8 6.2 2.2Q8.6 4.4 8.2 6.8Q7.6 9.8 4.3 9.8Q0.6 9.8 0.4 6.6Q0.3 4.6 2 3.2Q2.2 4.4 2.8 4.6Q2.4 2 4.2 0.2Z" fill="#f8b300"/></svg>
<svg class="a" style="left:772.8px;top:15px" width="4" height="2.4" viewBox="0 0 4 2.4"><path d="M0.3 0.3L2 2L3.7 0.3" fill="none" stroke="#999" stroke-width="0.7"/></svg>
<svg class="a" style="left:835.6px;top:14.8px" width="4" height="2.4" viewBox="0 0 4 2.4"><path d="M0.3 0.3L2 2L3.7 0.3" fill="none" stroke="#fff" stroke-width="0.8"/></svg>
<svg class="a" style="left:105.2px;top:14.0px" width="3" height="4.2" viewBox="0 0 3 4.2"><path d="M2.6 0.3L0.6 2.2L2.6 4.1" fill="none" stroke="#7b8fa8" stroke-width="0.9"/></svg>
<svg class="a" style="left:391px;top:12px" width="7.4" height="7.4" viewBox="0 0 7.4 7.4"><circle cx="3" cy="3" r="2.2" fill="none" stroke="#666" stroke-width="1"/><path d="M4.6 4.6L6.8 6.8" stroke="#666" stroke-width="1.1"/></svg>
<svg class="a" style="left:835.6px;top:133.6px" width="6" height="6" viewBox="0 0 6 6"><g fill="none" stroke="#f0c8b8" stroke-width="0.8"><path d="M0.8 2.6A2.2 2.2 0 0 1 4.8 1.6"/><path d="M5.2 3.4A2.2 2.2 0 0 1 1.2 4.4"/></g></svg>
<svg class="a" style="left:1010.3px;top:159px" width="14" height="35" viewBox="0 0 14 35"><g transform="translate(9.6,30.5) rotate(-90)"><circle cx="3.4" cy="-2.6" r="3.2" fill="#fff"/><path d="M3.4 -4.6V-0.8" stroke="#5aa72d" stroke-width="1"/><text x="9" y="0" font-size="7.2" font-family="Liberation Sans" font-weight="700" fill="#fff">Help</text></g></svg>
<svg class="a" style="left:998px;top:459.6px" width="11.4" height="12.4" viewBox="0 0 11.4 12.4"><path d="M1 0.3H10Q11 0.3 11 1.3V12.1L9.4 10.8H1Q0.2 10.8 0.2 9.8V1.3Q0.2 0.3 1 0.3Z" fill="#fff"/><path d="M2.4 7.6Q5.6 9.8 8.8 7.6" fill="none" stroke="#f5901f" stroke-width="0.9"/></svg>
<svg class="a" style="left:647.6px;top:426.6px" width="6" height="6" viewBox="0 0 6 6"><path d="M0.8 3L3 1L5.2 3M0.8 5L3 3L5.2 5" fill="none" stroke="#e85a4a" stroke-width="0.8"/></svg>
</body></html>
